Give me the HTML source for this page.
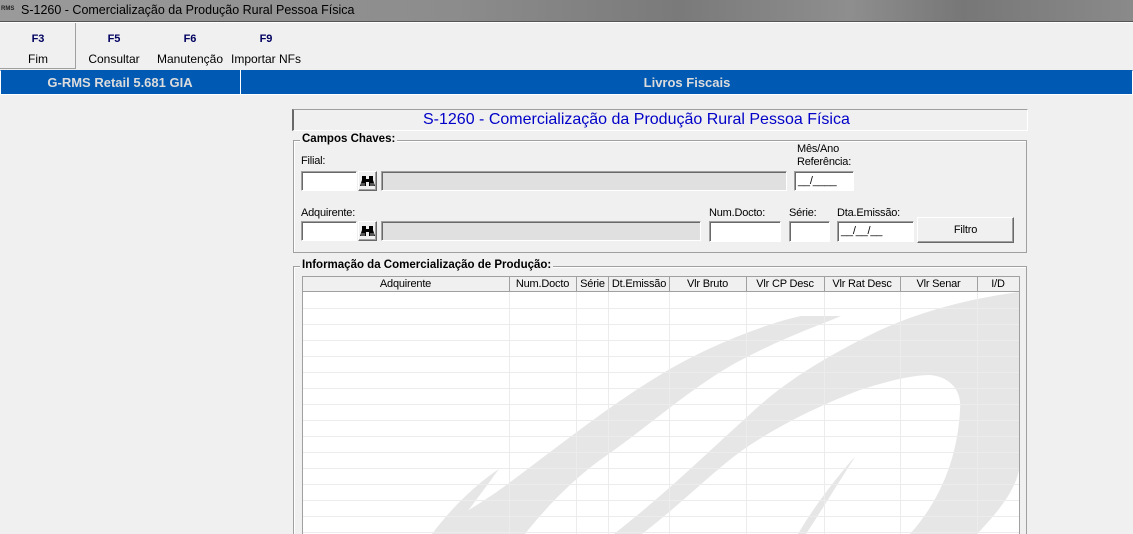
<!DOCTYPE html>
<html><head><meta charset="utf-8"><style>
*{margin:0;padding:0;box-sizing:border-box}
html,body{width:1133px;height:534px;overflow:hidden}
body{background:#f0f0f0;font-family:"Liberation Sans",sans-serif;position:relative}
.a{position:absolute}
.t{font-size:11px;color:#000;white-space:nowrap;letter-spacing:-0.2px}
.sunk{border-top:1px solid #a0a0a0;border-left:1px solid #a0a0a0;border-right:1px solid #fff;border-bottom:1px solid #fff;box-shadow:inset 1px 1px 0 #696969}
.w{background:#fff}
.g{background:#e0e0e0}
.btn{background:#f0f0f0;border-top:1px solid #fff;border-left:1px solid #fff;border-right:1px solid #696969;border-bottom:1px solid #696969;box-shadow:inset -1px -1px 0 #a0a0a0}
.grp{border:1px solid #a0a0a0;box-shadow:1px 1px 0 #fff inset}
.lg{font-size:11.5px;font-weight:bold;background:#f0f0f0;padding:0 2px;white-space:nowrap}
.fk{font-size:11px;font-weight:bold;color:#000060;text-align:center;width:70px}
.fl{font-size:12px;text-align:center;width:80px;white-space:nowrap}
.th{font-size:11px;text-align:center;top:278px;height:14px;white-space:nowrap;letter-spacing:-0.2px}
</style></head><body>
<div class="a" style="left:0;top:0;width:1133px;height:21px;background:linear-gradient(90deg,#9a9a9a,#8c8c8c 40%,#7a7a7a 60%,#8e8e8e 75%,#777 85%,#8a8a8a)"></div>
<div class="a" style="left:0;top:21px;width:1133px;height:2px;background:#555;border-bottom:1px solid #fff"></div>
<div class="a" style="left:1px;top:6px;font-size:6px;font-weight:bold;color:#222">RMS</div>
<div class="a" style="left:21px;top:3px;font-size:12.5px;color:#000">S-1260 - Comercialização da Produção Rural Pessoa Física</div>

<div class="a" style="left:0;top:23px;width:76px;height:46px;border-right:1px solid #a0a0a0;border-bottom:1px solid #a0a0a0"></div>
<div class="a fk" style="left:3px;top:33px">F3</div><div class="a fl" style="left:-2px;top:52px">Fim</div>
<div class="a fk" style="left:79px;top:33px">F5</div><div class="a fl" style="left:74px;top:52px">Consultar</div>
<div class="a fk" style="left:155px;top:33px">F6</div><div class="a fl" style="left:150px;top:52px">Manutenção</div>
<div class="a fk" style="left:231px;top:33px">F9</div><div class="a fl" style="left:226px;top:52px">Importar NFs</div>

<div class="a" style="left:0;top:70px;width:1133px;height:25px;background:#0059b3;border:1px solid #fff;border-top:1px solid #0059b3"></div>
<div class="a" style="left:240px;top:70px;width:1px;height:25px;background:#fff"></div>
<div class="a" style="left:0;top:75px;width:240px;text-align:center;color:#dcdcdc;font-weight:bold;font-size:13px">G-RMS Retail 5.681 GIA</div>
<div class="a" style="left:241px;top:75px;width:892px;text-align:center;color:#dcdcdc;font-weight:bold;font-size:13px">Livros Fiscais</div>

<div class="a" style="left:292px;top:109px;width:736px;height:22px;border:1px solid #a0a0a0;border-left:2px solid #696969;border-right:1px solid #fff;border-bottom:1px solid #fff"></div>
<div class="a" style="left:423px;top:111px;font-size:16px;color:#0000c8">S-1260 - Comercialização da Produção Rural Pessoa Física</div>

<div class="a grp" style="left:293px;top:140px;width:734px;height:113px"></div>
<div class="a lg" style="left:300px;top:133px">Campos Chaves:</div>
<div class="a t" style="left:301px;top:155px">Filial:</div>
<div class="a sunk w" style="left:301px;top:171px;width:56px;height:20px"></div>
<div class="a btn" style="left:358px;top:171px;width:19px;height:20px"><svg width="17" height="18" viewBox="0 0 17 18"><path d="M3,4h4v3h3V4h4v4l2,6h-6v-4H7v4H1l2-6z" fill="#000"/><rect x="2" y="11" width="4" height="3" fill="#555"/><rect x="11" y="11" width="4" height="3" fill="#555"/></svg></div>
<div class="a sunk g" style="left:381px;top:171px;width:406px;height:20px"></div>
<div class="a t" style="left:797px;top:143px;line-height:13px">Mês/Ano<br>Referência:</div>
<div class="a sunk w t" style="left:794px;top:171px;width:60px;height:20px;padding:3px 0 0 3px">__/____</div>
<div class="a t" style="left:301px;top:207px">Adquirente:</div>
<div class="a sunk w" style="left:301px;top:221px;width:56px;height:20px"></div>
<div class="a btn" style="left:358px;top:221px;width:19px;height:20px"><svg width="17" height="18" viewBox="0 0 17 18"><path d="M3,4h4v3h3V4h4v4l2,6h-6v-4H7v4H1l2-6z" fill="#000"/><rect x="2" y="11" width="4" height="3" fill="#555"/><rect x="11" y="11" width="4" height="3" fill="#555"/></svg></div>
<div class="a sunk g" style="left:381px;top:221px;width:320px;height:20px"></div>
<div class="a t" style="left:709px;top:207px">Num.Docto:</div>
<div class="a sunk w" style="left:709px;top:221px;width:72px;height:21px"></div>
<div class="a t" style="left:789px;top:207px">Série:</div>
<div class="a sunk w" style="left:789px;top:221px;width:41px;height:21px"></div>
<div class="a t" style="left:837px;top:207px">Dta.Emissão:</div>
<div class="a sunk w t" style="left:837px;top:221px;width:77px;height:21px;padding:3px 0 0 3px">__/__/__</div>
<div class="a btn t" style="left:917px;top:217px;width:97px;height:26px;text-align:center;line-height:24px">Filtro</div>

<div class="a grp" style="left:293px;top:266px;width:734px;height:280px"></div>
<div class="a lg" style="left:300px;top:259px">Informação da Comercialização de Produção:</div>
<div class="a" style="left:302px;top:276px;width:718px;height:270px;background:#fff;border:1px solid #a0a0a0;overflow:hidden">
<svg class="a" style="left:-303px;top:-277px" width="1133" height="534">
<g fill="#e5e6e5">
<path d="M841,316 L801,316 C760,325 700,350 660,375 C610,405 560,445 509,483 C480,505 450,520 432,534 L525,534 C540,515 570,480 610,453 C650,425 700,380 747,357 C790,335 820,325 841,316 Z"/>
<path d="M1019,292 C960,300 910,315 870,335 C820,360 780,385 747,417 C710,450 670,490 614,534 L642,534 C680,505 720,465 747,447 C780,425 820,405 860,390 C890,380 915,375 930,375 C950,377 962,390 960,410 C958,450 945,495 910,534 L977,534 C1000,510 1015,490 1019,470 Z"/>
<path d="M499,469 L493,473 C470,490 450,510 432,534 L450,534 C465,515 480,495 499,469 Z"/>
<path d="M855,457 L851,461 C835,480 815,505 798,534 L806,534 C825,505 840,480 855,457 Z"/>
</g>
<g stroke="#ececec" stroke-width="1">
<path d="M302,308.5H1019M302,324.5H1019M302,340.5H1019M302,356.5H1019M302,372.5H1019M302,388.5H1019M302,404.5H1019M302,420.5H1019M302,436.5H1019M302,452.5H1019M302,468.5H1019M302,484.5H1019M302,500.5H1019M302,516.5H1019M302,532.5H1019"/>
<path d="M509.5,292V534M576.5,292V534M608.5,292V534M669.5,292V534M746.5,292V534M824.5,292V534M900.5,292V534M977.5,292V534"/>
</g>
<rect x="302" y="276" width="718" height="16" fill="#f0f0f0"/>
<g stroke="#a0a0a0"><path d="M302,291.5H1019M509.5,276V292M576.5,276V292M608.5,276V292M669.5,276V292M746.5,276V292M824.5,276V292M900.5,276V292M977.5,276V292"/></g>
</svg>
</div>
<div class="a th" style="left:302px;width:207px">Adquirente</div>
<div class="a th" style="left:509px;width:67px">Num.Docto</div>
<div class="a th" style="left:576px;width:33px">Série</div>
<div class="a th" style="left:609px;width:60px">Dt.Emissão</div>
<div class="a th" style="left:669px;width:77px">Vlr Bruto</div>
<div class="a th" style="left:746px;width:78px">Vlr CP Desc</div>
<div class="a th" style="left:824px;width:76px">Vlr Rat Desc</div>
<div class="a th" style="left:900px;width:77px">Vlr Senar</div>
<div class="a th" style="left:977px;width:42px">I/D</div>
</body></html>
